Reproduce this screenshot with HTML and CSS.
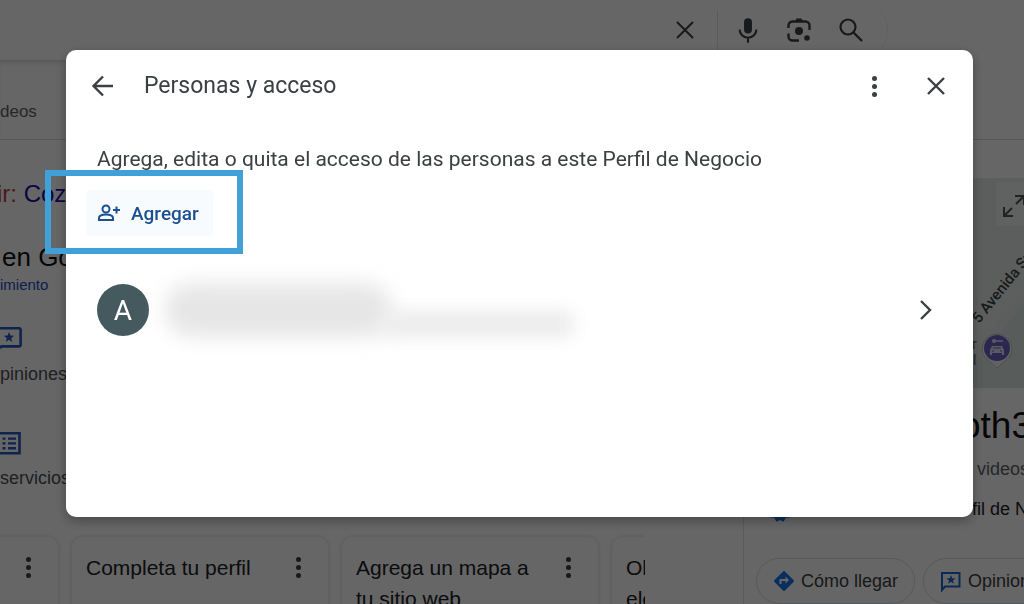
FILE: index.html
```html
<!DOCTYPE html>
<html lang="es">
<head>
    <meta charset="utf-8">
    <title>Personas y acceso</title>
    <link rel="stylesheet" href="styles.css">
</head>
<body>
    <div class="page">
        <header class="header">
            <form class="search">
                <input type="text" aria-label="Buscar">
                <button type="button" class="clear" aria-label="Borrar">
                    <svg width="24" height="24" viewBox="0 0 24 24"><path d="M4 4l16 16M20 4L4 20" fill="none" stroke="currentColor" stroke-width="2"/></svg>
                </button>
                <button type="button" class="voice" aria-label="Buscar por voz">
                    <svg width="28" height="28" viewBox="0 0 24 24"><rect x="8.600" y="2" width="6.800" height="13" rx="3.400" fill="currentColor"/><path d="M4.800 11.500a7.200 7.200 0 0 0 14.400 0M12 18.500V23" fill="none" stroke="currentColor" stroke-width="1.800"/></svg>
                </button>
                <button type="button" aria-label="Buscar por imagen">
                    <svg width="28" height="28" viewBox="0 0 28 28"><path d="M3.500 12V9.500a4 4 0 0 1 4-4h13a4 4 0 0 1 4 4V14M3.500 17.500v3a4 4 0 0 0 4 4H14" fill="none" stroke="currentColor" stroke-width="2.400"/><path d="M10 5.500l1.500-3h5l1.500 3z" fill="currentColor"/><circle cx="14" cy="15" r="4" fill="currentColor"/><circle cx="22" cy="22" r="2.800" fill="currentColor"/></svg>
                </button>
                <button type="submit" aria-label="Buscar">
                    <svg width="28" height="28" viewBox="0 0 28 28"><circle cx="11" cy="11" r="7.500" fill="none" stroke="currentColor" stroke-width="2.200"/><path d="M16.500 16.500L25 25" stroke="currentColor" stroke-width="2.400"/></svg>
                </button>
            </form>
        </header>

        <nav class="tabs">
            <div class="tabs-inner"><a href="#">deos</a></div>
        </nav>

        <div class="columns">
            <main class="main">
                <p class="suggestion"><span>ir:</span> <a href="#">Coz</a></p>
                <h2>en Go</h2>
                <a class="more" href="#">imiento</a>

                <a class="shortcut" href="#">
                    <svg width="22" height="26" viewBox="0 0 22 26"><path d="M0 2.200h19a1.600 1.600 0 0 1 1.600 1.600v15a1.600 1.600 0 0 1-1.600 1.600H1.500L0 22" fill="none" stroke="currentColor" stroke-width="2.600"/><path d="M9 6l1.400 3.600 3.800.2-3 2.400 1 3.700L9 13.800l-3.200 2.100 1-3.700-3-2.400 3.800-.2z" fill="currentColor"/></svg>
                    <span>piniones</span>
                </a>
                <a class="shortcut" href="#">
                    <svg width="22" height="26" viewBox="0 0 22 26"><path d="M0 3.300h19.500v20H0" fill="none" stroke="currentColor" stroke-width="2.600"/><path d="M2.500 8.600h3M2.500 13.400h3M2.500 18.200h3M8 8.600h8M8 13.400h8M8 18.200h8" stroke="currentColor" stroke-width="2.400"/></svg>
                    <span>servicios</span>
                </a>

                <div class="cards">
                    <div class="card">
                        <h3></h3>
                        <button type="button" class="dots" aria-label="Opciones"><i></i><i></i><i></i></button>
                    </div>
                    <div class="card">
                        <h3>Completa tu perfil</h3>
                        <button type="button" class="dots" aria-label="Opciones"><i></i><i></i><i></i></button>
                    </div>
                    <div class="card">
                        <h3>Agrega un mapa a tu sitio web</h3>
                        <button type="button" class="dots" aria-label="Opciones"><i></i><i></i><i></i></button>
                    </div>
                    <div class="card">
                        <h3>Ol<br>ele</h3>
                    </div>
                </div>
            </main>

            <aside class="side">
                <svg class="map" width="281" height="210" viewBox="0 0 281 210">
                    <rect width="281" height="210" fill="#e4eae9"/>
                    <path d="M210 210L281 125V210z" fill="#dce7e2"/>
                    <path d="M215 175L281 92" stroke="#e8eeec" stroke-width="22"/>
                    <rect x="252" y="4" width="40" height="44" rx="3" fill="#f0f3f3"/>
                    <path d="M260 29v9h9M260 38l8-8M271 18h9v9M280 18l-8 8" fill="none" stroke="#555" stroke-width="2"/>
                    <text x="235" y="146" transform="rotate(-51 235 146)" class="street">5 Avenida Su</text>
                    <text x="228" y="171" class="place">r</text>
                    <text x="229" y="187" class="place">l</text>
                    <path d="M238 171a15 15 0 1 1 30 0c0 9-8 12-15 19c-7-7-15-10-15-19z" fill="#f4f4f8" stroke="#c2c2c2"/>
                    <circle cx="253" cy="170" r="13" fill="#6f62c6"/>
                    <path d="M246 177v-5l2-4h10l2 4v5h-2v-2h-10v2z" fill="#e4e0f8"/>
                    <path d="M250 163h9" stroke="#e4e0f8" stroke-width="1.500"/>
                    <circle cx="250" cy="163" r="2" fill="#e4e0f8"/>
                    <path d="M249 170h8M248 173h2M256 173h2" stroke="#6f62c6" stroke-width="1.200"/>
                </svg>
                <h1>oth3</h1>
                <a class="media" href="#">videos</a>
                <p class="owner">
                    <svg width="28" height="28" viewBox="0 0 24 24"><path d="M12 3l3-2 2 3.500 4 .5v4l2.500 3L21 15v4l-4 .5-2 3.500-3-1.500L9 23l-2-3.500L3 19v-4L.5 12 3 9V5l4-.5L9 1z" fill="currentColor"/></svg>
                    <span>fil de Negocio</span>
                </p>
                <div class="actions">
                    <a href="#">
                        <svg width="22" height="22" viewBox="0 0 22 22"><path d="M11 2L20 11 11 20 2 11z" fill="#1a73e8" stroke="#1a73e8" stroke-width="2" stroke-linejoin="round"/><path d="M7.500 14v-4h6" fill="none" stroke="#fff" stroke-width="2"/><path d="M12.500 6.500L16 10l-3.500 3.500z" fill="#fff"/></svg>
                        Cómo llegar
                    </a>
                    <a href="#">
                        <svg width="22" height="22" viewBox="0 0 22 22"><path d="M2 20V3h17.500v13.500H5z" fill="none" stroke="#1967d2" stroke-width="2"/><path d="M11 5l1.200 3.300 3.500.1-2.800 2.100 1 3.300-2.900-2-2.900 2 1-3.300-2.800-2.100 3.500-.1z" fill="#1967d2"/></svg>
                        Opiniones
                    </a>
                </div>
            </aside>
        </div>
    </div>

    <div class="overlay">
        <div class="modal" role="dialog" aria-labelledby="modalTitle">
            <div class="modal-header">
                <button type="button" aria-label="Volver">
                    <svg width="24" height="24" viewBox="0 0 24 24"><path d="M22 12H3M12 2.500L2.500 12l9.500 9.500" fill="none" stroke="currentColor" stroke-width="2.400"/></svg>
                </button>
                <h2 id="modalTitle">Personas y acceso</h2>
                <button type="button" class="dots" aria-label="Más opciones"><i></i><i></i><i></i></button>
                <button type="button" aria-label="Cerrar">
                    <svg width="24" height="24" viewBox="0 0 24 24"><path d="M4 4l16 16M20 4L4 20" fill="none" stroke="currentColor" stroke-width="2.400"/></svg>
                </button>
            </div>

            <p class="description">Agrega, edita o quita el acceso de las personas a este Perfil de Negocio</p>

            <div class="add">
                <button type="button">
                    <svg width="24" height="24" viewBox="0 0 24 24"><circle cx="9" cy="8" r="3.500" fill="none" stroke="currentColor" stroke-width="2"/><path d="M2 19v-2c0-2.500 4-3.500 7-3.500s7 1 7 3.500v2zM16 9h7M19.500 5.500v7" fill="none" stroke="currentColor" stroke-width="2"/></svg>
                    Agregar
                </button>
            </div>

            <div class="person">
                <div class="avatar">A</div>
                <div class="hidden-info">
                    <div class="hidden-name"></div>
                    <div class="hidden-email"></div>
                </div>
                <button type="button" aria-label="Ver detalles">
                    <svg width="24" height="24" viewBox="0 0 24 24"><path d="M7 3l9 9-9 9" fill="none" stroke="currentColor" stroke-width="2.400"/></svg>
                </button>
            </div>
        </div>
    </div>
</body>
</html>
```

FILE: styles.css
```css
*, *::after { box-sizing: border-box; }
body { margin: 0; font-family: "Liberation Sans", Arial, sans-serif; color: #202124; overflow: hidden; }
h1, h2, h3, p { margin: 0; font-weight: normal; }
a { color: inherit; text-decoration: none; }
svg { display: block; flex-shrink: 0; }
button { padding: 0; border: none; background: none; color: inherit; font: inherit; cursor: pointer; }

.page { height: 100vh; overflow: hidden; background: #fff; }

/* Search bar */
.header { height: 60px; padding-right: 136px; }
.search { display: flex; align-items: center; height: 60px; padding-right: 10px; border-right: 1px solid #f0f0f0; border-radius: 30px; color: #3c4043; }
.search input { flex: 1; border: none; outline: none; background: none; }
.search button { display: flex; justify-content: center; width: 52px; }
.search .clear { width: 46px; margin-right: 9px; }
.search .voice { width: 56px; padding: 6px 0 6px 4px; border-left: 1px solid #e4e4e4; }

.tabs { height: 80px; border-bottom: 1px solid #dcdcdc; }
.tabs-inner { width: 72%; height: 79px; padding-top: 39px; border-top: 1px solid #dcdcdc; box-shadow: inset 0 4px 6px -4px #ccc; font-size: 17px; line-height: 24px; color: #5f6368; }

.columns { display: grid; grid-template-columns: minmax(0, 1fr) 281px; }

/* Left column */
.main { padding-top: 38px; }
.suggestion { text-indent: -3px; font-size: 24px; line-height: 32px; color: #1a0dab; }
.suggestion span { color: #c5404a; }
.main h2 { margin-top: 31px; padding-left: 2px; font-size: 26px; line-height: 32px; color: #111; }
.more { display: block; font-size: 15px; line-height: 24px; color: #1a4fc4; }
.shortcut { display: block; margin-top: 29px; color: #2458c4; }
.shortcut span { display: block; margin-top: 10px; font-size: 18px; line-height: 24px; color: #4d5156; }
.shortcut + .shortcut { margin-top: 44px; }

.cards { display: flex; gap: 12px; width: 645px; margin-top: 44px; padding-top: 2px; overflow: hidden; }
.card { display: flex; justify-content: space-between; flex: 0 0 258px; height: 140px; padding: 15px 22px 0 14px; border: 1px solid #f0f0f0; border-radius: 12px; box-shadow: 0 0 3px #ddd; }
.card:first-child { margin-left: -199px; }
.card h3 { width: 180px; font-size: 21px; line-height: 31px; }
.card .dots { margin-top: 3px; }

.dots { display: flex; flex-direction: column; align-items: center; justify-content: center; gap: 3px; width: 16px; height: 24px; color: #3c4043; }
.dots i { width: 5px; height: 5px; border-radius: 50%; background: currentColor; }

/* Business panel */
.side { padding-top: 38px; border-left: 1px solid #e4e4e4; }
.map { overflow: hidden; }
.street { font: 500 15px Roboto, sans-serif; fill: #3c4043; }
.place { font: 14px Roboto, sans-serif; fill: #5f6368; }
.side h1 { margin-top: 16px; padding-left: 216px; font-size: 37px; line-height: 44px; color: #111; }
.media { display: block; margin-top: 9px; padding-left: 233px; font-size: 18px; line-height: 24px; color: #5f6368; }
.owner { display: flex; align-items: center; gap: 8px; margin-top: 14px; padding-left: 22px; font-size: 18px; line-height: 28px; color: #1a73e8; }
.owner span { flex: 1; padding-left: 170px; color: #202124; white-space: nowrap; }
.actions { display: flex; gap: 8px; margin-top: 35px; padding-left: 12px; overflow: hidden; }
.actions a { display: flex; align-items: center; flex-shrink: 0; gap: 6px; height: 46px; padding: 0 16px; border: 1px solid #dadce0; border-radius: 23px; font-size: 18px; color: #3c4043; }

/* Dialog */
.overlay { position: fixed; inset: 0; padding: 50px 51px 0 66px; background: rgba(0, 0, 0, 0.6); font-family: Roboto, sans-serif; }
.modal { min-height: 467px; padding: 16px 25px 0 31px; border-radius: 10px; background: #fff; box-shadow: 0 4px 12px rgba(0, 0, 0, 0.3); color: #3c4043; }
.modal-header { display: flex; align-items: center; height: 40px; margin-left: -6px; }
.modal-header h2 { flex: 1; padding-left: 29px; font-size: 23px; line-height: 32px; }
.modal-header .dots { margin-right: 42px; }
.description { margin-top: 39px; font-size: 21px; line-height: 28px; }

.add { position: relative; margin: 17px 0 0 -11px; }
.add button { display: flex; align-items: center; gap: 10px; height: 46px; padding: 0 14px 0 11px; border-radius: 4px; background: #f8fbfe; color: #1c5090; font-size: 19px; font-weight: 500; }
.add::after { content: ""; position: absolute; top: -20px; left: -41px; width: 198px; height: 84px; border: 6px solid #3fa1d8; pointer-events: none; }

.person { display: flex; align-items: center; margin-top: 47px; padding-right: 10px; }
.avatar { width: 52px; height: 52px; border-radius: 50%; background: #455a5f; color: #fff; font-size: 28px; line-height: 54px; text-align: center; }
.hidden-info { display: flex; flex: 1; margin-left: 16px; }
.hidden-name { width: 226px; height: 54px; border-radius: 26px; background: #e6e6e6; filter: blur(10px); }
.hidden-email { align-self: flex-end; width: 192px; height: 26px; margin-left: -10px; background: #ebebeb; filter: blur(9px); }
```
